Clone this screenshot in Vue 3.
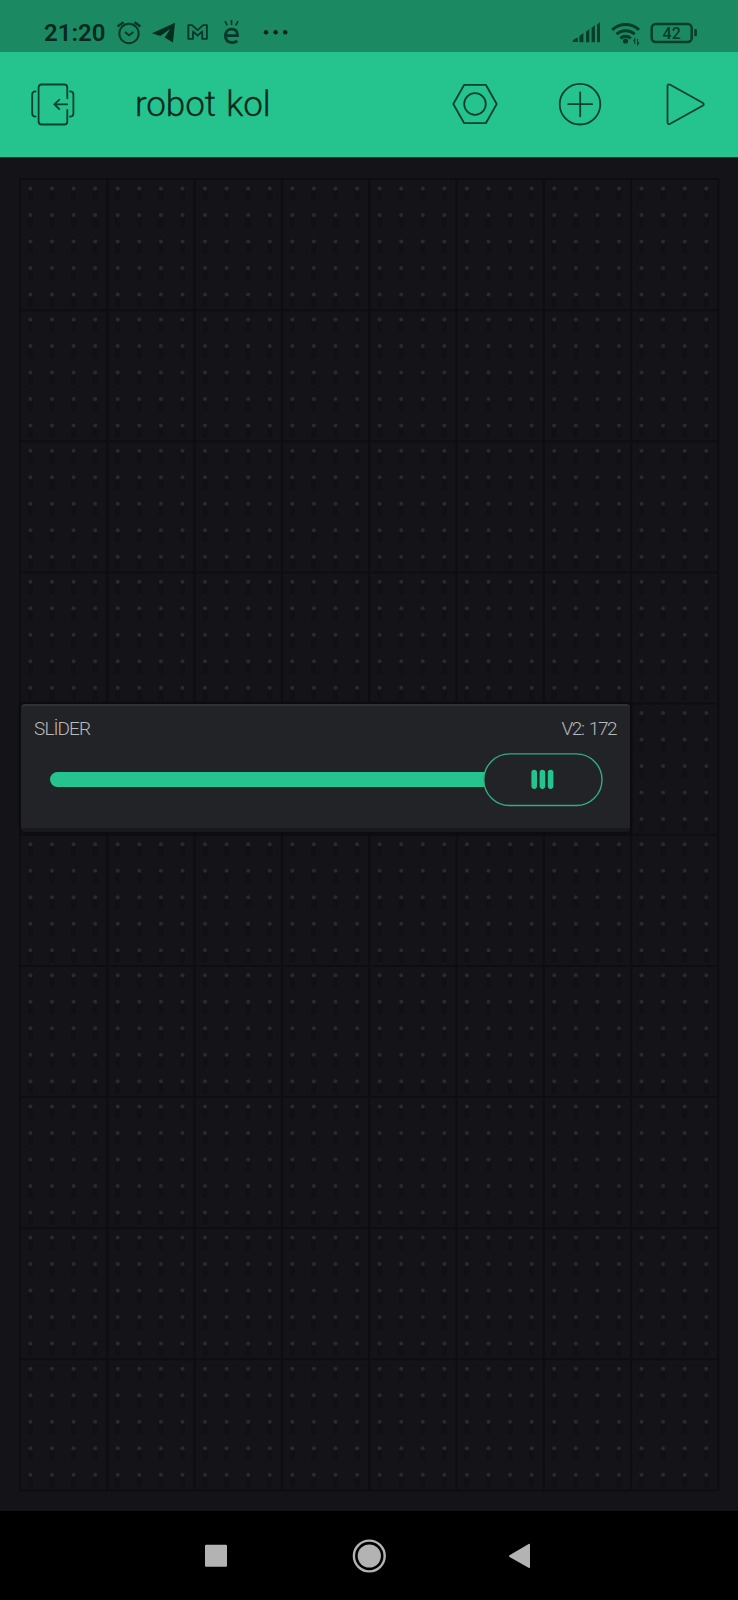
<script setup>
const cols = 8
const rows = 10
const cellW = 87.3
const cellH = 131.15
const dots = []
for (let r = 0; r < rows; r++)
  for (let j = 0; j < 5; j++)
    for (let c = 0; c < cols; c++)
      for (let i = 0; i < 4; i++)
        dots.push({ x: 10.4 + c * cellW + i * 21.6, y: 9.4 + r * cellH + j * 26.5 })
const vLines = Array.from({ length: cols + 1 }, (_, i) => i * cellW)
const hLines = Array.from({ length: rows + 1 }, (_, i) => i * cellH)
</script>

<template>
  <div class="phone">
    <div class="status">
      <span class="clock">21:20</span>
      <svg class="left-icons" width="180" height="52" viewBox="112 0 180 52" fill="none" stroke="#07372a" stroke-width="2">
        <circle cx="129" cy="33.5" r="9.7" />
        <path d="M117.5 26.5l6-4.3M140.5 26.5l-6-4.3" stroke-width="2.3" />
        <path d="M125 32l4 3.2 4.4-3.2" />
        <path d="M152 33.2L175 22.8 173 42.6 164.6 37.5 170.2 29 160.3 36z" fill="#052c20" stroke="none" />
        <path d="M188.3 25.2h3.7l5.6 5 5.6-5h3.7v13.6h-4.7v-7.4l-4.6 4.3-4.6-4.3v7.4h-4.7z" stroke-width="1.8" stroke-linejoin="round" />
        <path d="M225.2 35.7h12.3c0-4.3-2.2-6.5-5.8-6.5-4 0-6.2 2.7-6.2 6.6 0 4.2 2.5 6.7 6.6 6.7 2.2 0 4-.6 5.2-1.6" stroke-width="2.8" />
        <path d="M231.5 20v5M225 21.2l2.2 4.2M238 21.2l-2.2 4.2" stroke-width="1.7" />
        <g fill="#052218" stroke="none">
          <circle cx="266" cy="32.3" r="2.2" /><circle cx="275.6" cy="32.3" r="2.2" /><circle cx="285.2" cy="32.3" r="2.2" />
        </g>
      </svg>
      <svg class="right-icons" width="130" height="52" viewBox="570 0 130 52" fill="#073b2a">
        <path d="M572.5 42q-.8-1.6 5.2-4.5V42zM579.4 36l4-3V42.3h-4zM586 31.7l3.3-2.6V42.3H586zM591.6 27.8l3.3-2.6V42.3h-3.3zM597 24.6l3-2.4V42.3h-3z" />
        <g fill="none" stroke="#073b2a" stroke-width="3">
          <path d="M612.2 29.8c7.5-7.2 19.4-7.2 26.8 0" />
          <path d="M616.5 34.3c5-4.9 13.2-4.9 18.2 0" />
          <path d="M620.4 38.3c2.9-2.6 7.5-2.6 10.4 0" />
        </g>
        <circle cx="625.5" cy="41" r="2.6" />
        <path d="M634.8 44v-5l-1.4 2M637.6 39v5.6l1.4-2.2" fill="none" stroke="#073b2a" stroke-width="1.1" />
        <rect x="651.7" y="24" width="40" height="18" rx="4" fill="none" stroke="#073b2a" stroke-width="2.4" />
        <path d="M694.3 29h1.2q1.4 0 1.4 1.4v4.5q0 1.4-1.4 1.4h-1.2z" />
        <text x="671.7" y="38.8" text-anchor="middle" font-family="Roboto, sans-serif" font-weight="500" font-size="16">42</text>
      </svg>
    </div>

    <header class="bar">
      <svg class="exit" width="46" height="44" viewBox="0 0 46 44">
        <path d="M37.3 16.3V5.5q0-3-3-3H11.6q-3 0-3 3v34q0 3 3 3h22.7q3 0 3-3V28M37.3 22.3H24.5M29.3 17.6l-5 4.7 5 4.7M5.6 9.3q-3.4 0-3.4 3.2v18.9q0 3.2 3.4 3.2M40 9.3q3.4 0 3.4 3.2v18.9q0 3.2-3.4 3.2" />
      </svg>
      <h1 class="title">robot kol</h1>
      <nav class="actions">
        <svg width="46" height="44" viewBox="0 0 46 44">
          <path d="M12.2 2.8h21.6L44.7 22 33.8 41.2H12.2L1.3 22z" /><circle cx="23" cy="22" r="10.8" />
        </svg>
        <svg width="44" height="44" viewBox="0 0 44 44">
          <circle cx="22" cy="22.2" r="20.3" /><path d="M10.3 22.2h23.8M22.2 10.3v24" />
        </svg>
        <svg width="42" height="44" viewBox="0 0 42 44">
          <path d="M2.5 4.2q0-2.8 2.7-1.5L37.6 20.7q2.3 1.5 0 3L5.2 41.8q-2.7 1.3-2.7-1.5z" />
        </svg>
      </nav>
    </header>

    <main class="canvas">
      <div class="board">
        <svg class="grid" width="702" height="1316" viewBox="-2 -2 702 1316">
          <g class="lines">
            <line v-for="x in vLines" :key="'v' + x" :x1="x" :x2="x" y1="0" y2="1311.5" />
            <line v-for="y in hLines" :key="'h' + y" x1="0" x2="698.4" :y1="y" :y2="y" />
          </g>
          <path v-for="(d, i) in dots" :key="'s' + i" class="shade" :d="`M${d.x} ${d.y + 3}v9`" />
          <circle v-for="(d, i) in dots" :key="i" class="dot" :cx="d.x" :cy="d.y" r="2" />
        </svg>
        <section class="widget">
          <div class="labels"><span class="name">SLİDER</span><span class="value">V2: 172</span></div>
          <div class="slider">
            <div class="track"></div>
            <svg class="thumb" width="120" height="54" viewBox="0 0 120 54">
              <rect x="0.8" y="0.9" width="118.2" height="51.6" rx="25.8" />
              <path d="M51.2 19.5v13.6M59.4 19.5v13.6M67.6 19.5v13.6" />
            </svg>
          </div>
        </section>
      </div>
    </main>

    <footer class="nav">
      <svg width="738" height="89" viewBox="0 0 738 89" fill="#b3b3b3">
        <rect x="205" y="33.7" width="22" height="22" rx="1" />
        <circle cx="369.3" cy="45" r="11.6" />
        <circle cx="369.3" cy="45" r="15.4" fill="none" stroke="#b3b3b3" stroke-width="2.4" />
        <path d="M509.5 44.2L528.6 33q1.4-.7 1.4.8V56q0 1.5-1.4.8L509.5 46q-1.2-.9 0-1.8z" />
      </svg>
    </footer>
  </div>
</template>

<style>
body { margin: 0; background: #131318; }
</style>

<style scoped>
.phone { width: 738px; height: 1600px; display: flex; flex-direction: column; overflow: hidden; background: #131318; font-family: Roboto, sans-serif; }
.status { height: 52px; background: #1b8a63; display: flex; box-sizing: border-box; padding: 0 38px 0 44px; }
.clock { width: 68px; padding-top: 19px; font-size: 24px; line-height: 28px; font-weight: 600; color: #06291e; }
.left-icons { flex: none; }
.right-icons { margin-left: auto; }
.bar { height: 106px; box-sizing: border-box; background: #25c48f; border-bottom: 1px solid #0b3a2c; display: flex; align-items: center; padding: 0 31px 2px 30px; }
.bar svg { fill: none; stroke: #0a4030; stroke-width: 1.8; stroke-linecap: round; stroke-linejoin: round; display: block; }
.title { margin: 2px 0 0 59px; font-size: 35px; line-height: 40px; font-weight: 300; color: #07271d; letter-spacing: -0.1px; word-spacing: 2px; -webkit-text-stroke: 0.35px #07271d; white-space: nowrap; }
.actions { margin-left: auto; display: flex; }
.actions svg + svg { margin-left: 60px; }
.actions svg:last-child { margin-left: 63px; }
.canvas { height: 1353px; box-sizing: border-box; padding: 21px 0 0 19.6px; }
.board { position: relative; width: 698.4px; height: 1311.5px; display: grid; grid-template-columns: repeat(8, 1fr); grid-template-rows: repeat(10, 1fr); }
.grid { position: absolute; left: -2px; top: -2px; }
.lines line { stroke: #0e0e12; stroke-width: 2; }
.shade { stroke: #111115; stroke-width: 5; }
.dot { fill: #2a2b2f; }
.widget { position: relative; grid-column: 1 / 8; grid-row: 5; margin: 0.2px 1px 2.5px 1px; box-sizing: border-box; background: #222327; border-top: 2px solid #303136; border-bottom: 4px solid #19191b; border-radius: 4px; box-shadow: 0 0 3px 1px #0b0b0e; padding: 12.5px 13px 0 13.5px; }
.labels { display: flex; justify-content: space-between; font-size: 19px; line-height: 22px; font-weight: 300; color: #b9babb; }
.name { letter-spacing: -0.95px; }
.value { letter-spacing: -1.4px; word-spacing: 2px; padding-right: 0.5px; }
.slider { height: 54px; margin: 12.5px 14px 0 16px; display: flex; align-items: center; }
.track { flex: 1; height: 15px; border-radius: 8px 0 0 8px; background: #25c48f; margin-right: -3px; }
.thumb { flex: none; position: relative; display: block; }
.thumb rect { fill: #222327; stroke: #2fae85; stroke-width: 1.4; }
.thumb path { stroke: #25c48f; stroke-width: 5.6; stroke-linecap: round; }
.nav { height: 89px; background: #000; }
.nav svg { display: block; }
</style>
